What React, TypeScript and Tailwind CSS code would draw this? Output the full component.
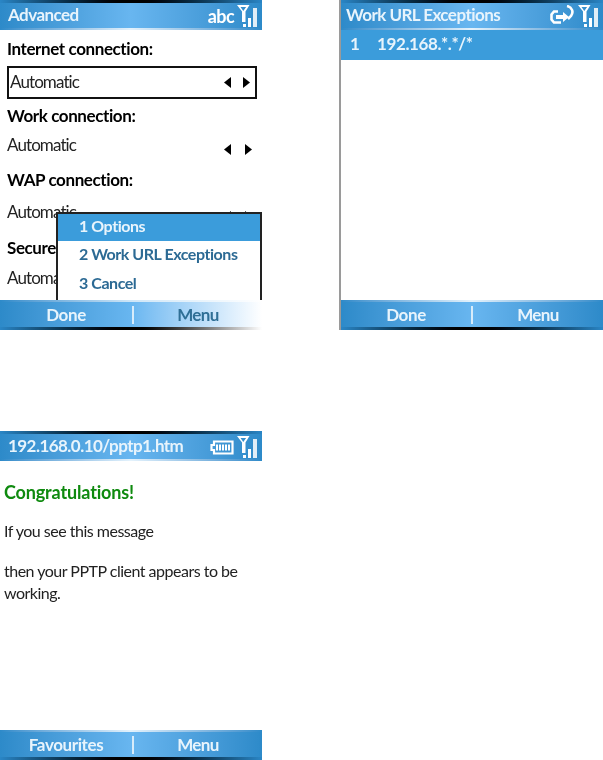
import React from "react";

const font = { fontFamily: 'Lato, "Noto Sans", sans-serif' };

function Signal() {
  return (
    <svg width="22" height="23" viewBox="0 0 22 23" className="shrink-0">
      <path d="M0 0h12.500l-4 6.500v10.500H5V6.500z M3.500 2l2.800 4 2.800-4z" fill="#fff" fillRule="evenodd" />
      <rect x="6" y="19" width="3" height="3" fill="#fff" />
      <rect x="11" y="13" width="3" height="9" fill="#fff" />
      <rect x="16" y="3" width="4" height="19" fill="#fff" opacity="0.85" />
    </svg>
  );
}

function Battery() {
  return (
    <svg width="24" height="15" viewBox="0 0 24 15" className="shrink-0">
      <path d="M4 1.500h18.500v12H4V10H1.500V5H4z" fill="none" stroke="#fff" strokeWidth="2.200" />
      <path d="M7 4.500v6 M10 4.500v6 M13 4.500v6 M16 4.500v6 M19 4.500v6" stroke="#fff" strokeWidth="2" />
    </svg>
  );
}

function Sync() {
  return (
    <svg width="25" height="22" viewBox="0 0 25 22" className="shrink-0">
      <path d="M8 6.500H4L1.500 9.500v5L4 17.500h7" fill="none" stroke="#fff" strokeWidth="2.600" />
      <path d="M6 10h7V7l6 5-6 5v-3H6z" fill="#fff" />
      <path d="M17 1c5 1 7 6 4 10l-3 3" fill="none" stroke="#fff" strokeWidth="2.600" />
    </svg>
  );
}

function Header({ title, pad = "pl-2", children }: { title: string; pad?: string; children: React.ReactNode }) {
  return (
    <div className="shrink-0">
      <div className="h-[3px] bg-gradient-to-r from-[#2a86c6] via-black to-[#2a86c6]" />
      <div className={`h-[25px] flex items-center justify-between ${pad} pr-[3px] bg-gradient-to-r from-[#2d8ac9] via-[#68b6f0] to-[#2d8ac9]`}>
        <span className="text-[17px] font-bold text-[#e8f4fc] tracking-[-0.55px] whitespace-nowrap -mt-[2px]">{title}</span>
        <div className="flex items-center gap-[3px] mt-[1px]">{children}</div>
      </div>
      <div className="h-[2px] bg-gradient-to-r from-[#2d8ac9] via-[#e4f2fc] to-[#2d8ac9]" />
    </div>
  );
}

function SoftBar({ left, fade = false, sep = "w-[132px]" }: { left: string; fade?: boolean; sep?: string }) {
  return (
    <div className="shrink-0">
      <div className={`h-[2px] bg-gradient-to-r ${fade ? "from-[#2d8ac9] via-[#cfe6f7] to-white" : "from-[#2d8ac9] via-[#e4f2fc] to-[#2d8ac9]"}`} />
      <div className={`h-[25px] flex items-center bg-gradient-to-r ${fade ? "from-[#2d8ac9] via-[#68b6f0] to-white" : "from-[#2d8ac9] via-[#68b6f0] to-[#2d8ac9]"}`}>
        <span className={`${sep} text-center text-[17px] font-bold text-[#e8f4fc] tracking-[-0.4px]`}>{left}</span>
        <span className="w-[2px] h-[18px] bg-[#d8ecfa]" />
        <span className={`flex-1 text-center text-[17px] font-bold tracking-[-0.6px] ${fade ? "text-[#2f6f96]" : "text-[#e8f4fc]"}`}>Menu</span>
      </div>
      <div className={`h-[3px] bg-gradient-to-r ${fade ? "from-[#2a86c6] via-black to-white" : "from-[#2a86c6] via-black to-[#2a86c6]"}`} />
    </div>
  );
}

function Arrows({ className = "", narrow = false }: { className?: string; narrow?: boolean }) {
  return (
    <svg width={narrow ? 26 : 28} height="11" viewBox={narrow ? "0 0 26 11" : "0 0 28 11"} className={`shrink-0 ${className}`}>
      <path d="M7 0v11L0 5.500z" fill="#000" />
      <path d={narrow ? "M19 0v11l7-5.500z" : "M21 0v11l7-5.500z"} fill="#000" />
    </svg>
  );
}

function Label({ children, className = "" }: { children: React.ReactNode; className?: string }) {
  return <div className={`pl-[7px] text-[17px] font-bold text-black leading-[22px] tracking-[-0.4px] whitespace-nowrap ${className}`}>{children}</div>;
}

function Value({ className = "" }: { className?: string }) {
  return (
    <div className={`flex items-center justify-between pl-[7px] pr-[10px] text-[17px] leading-[22px] text-[#222] tracking-[-0.9px] ${className}`}>
      <span>Automatic</span>
      <Arrows className="mt-[8px]" />
    </div>
  );
}

export default function App() {
  return (
    <div className="w-[603px] h-[760px] bg-white overflow-hidden blur-[0.4px]" style={font}>
      <div className="grid grid-cols-[262px_264px] grid-rows-[330px_430px] gap-x-[77px]">
        {/* Advanced */}
        <section className="relative flex flex-col h-[330px]">
          <Header title="Advanced">
            <span className="text-[18px] font-bold text-white leading-none tracking-[-0.6px]">abc</span>
            <Signal />
          </Header>
          <div className="flex-1 overflow-hidden">
            <Label className="mt-[8px]">Internet connection:</Label>
            <div className="ml-[7px] mr-[5px] mt-[6px] h-[33px] border-2 border-[#111] flex items-center justify-between pl-[1px] pr-[5px] text-[17px] text-[#222] tracking-[-0.9px]">
              <span className="-mt-[2px]">Automatic</span>
              <Arrows narrow />
            </div>
            <Label className="mt-[6px]">Work connection:</Label>
            <Value className="mt-[7px]" />
            <Label className="mt-[13px]">WAP connection:</Label>
            <Value className="mt-[10px]" />
            <Label className="mt-[14px]">Secure WAP connection:</Label>
            <Value className="mt-[8px]" />
          </div>
          <SoftBar left="Done" fade />
          <div className="absolute left-[56px] right-0 top-[212px] bottom-[30px] bg-white border-x-2 border-t-2 border-[#222] flex flex-col text-[16px] font-bold text-[#2c6a94] tracking-[-0.45px]">
            <div className="h-[27px] flex items-center pl-[21px] pb-[4px] bg-[#3b9cdb] text-[#e8f4fc]">1 Options</div>
            <div className="h-[29px] flex items-center pl-[21px] pb-[4px] whitespace-nowrap">2 Work URL Exceptions</div>
            <div className="h-[29px] flex items-center pl-[21px] pb-[4px]">3 Cancel</div>
          </div>
        </section>

        {/* Work URL Exceptions */}
        <section className="flex flex-col h-[330px] border-l-2 border-[#9a9a9a]">
          <Header title="Work URL Exceptions" pad="pl-[5px]">
            <Sync />
            <Signal />
          </Header>
          <div className="flex-1">
            <div className="h-[30px] flex items-center bg-[#3b9cdb] text-[17px] font-bold text-[#e8f4fc] pl-[9px] pb-[2px] tracking-[-0.4px]">
              <span className="w-[27px]">1</span>
              <span>192.168.*.*/*</span>
            </div>
          </div>
          <SoftBar left="Done" sep="w-[130px]" />
        </section>

        {/* Browser */}
        <section className="flex flex-col h-[329px] mt-[101px]">
          <Header title="192.168.0.10/pptp1.htm">
            <Battery />
            <Signal />
          </Header>
          <div className="flex-1 pl-[4px] text-[16px] text-[#222] tracking-[-0.5px]">
            <div className="mt-[19px] text-[18px] font-bold text-[#0f8a0f] leading-[24px] tracking-[-0.15px]">Congratulations!</div>
            <p className="mt-[17px] leading-[20px]">If you see this message</p>
            <p className="mt-[19px] leading-[22px]">then your PPTP client appears to be working.</p>
          </div>
          <SoftBar left="Favourites" />
        </section>
        <div />
      </div>
    </div>
  );
}
